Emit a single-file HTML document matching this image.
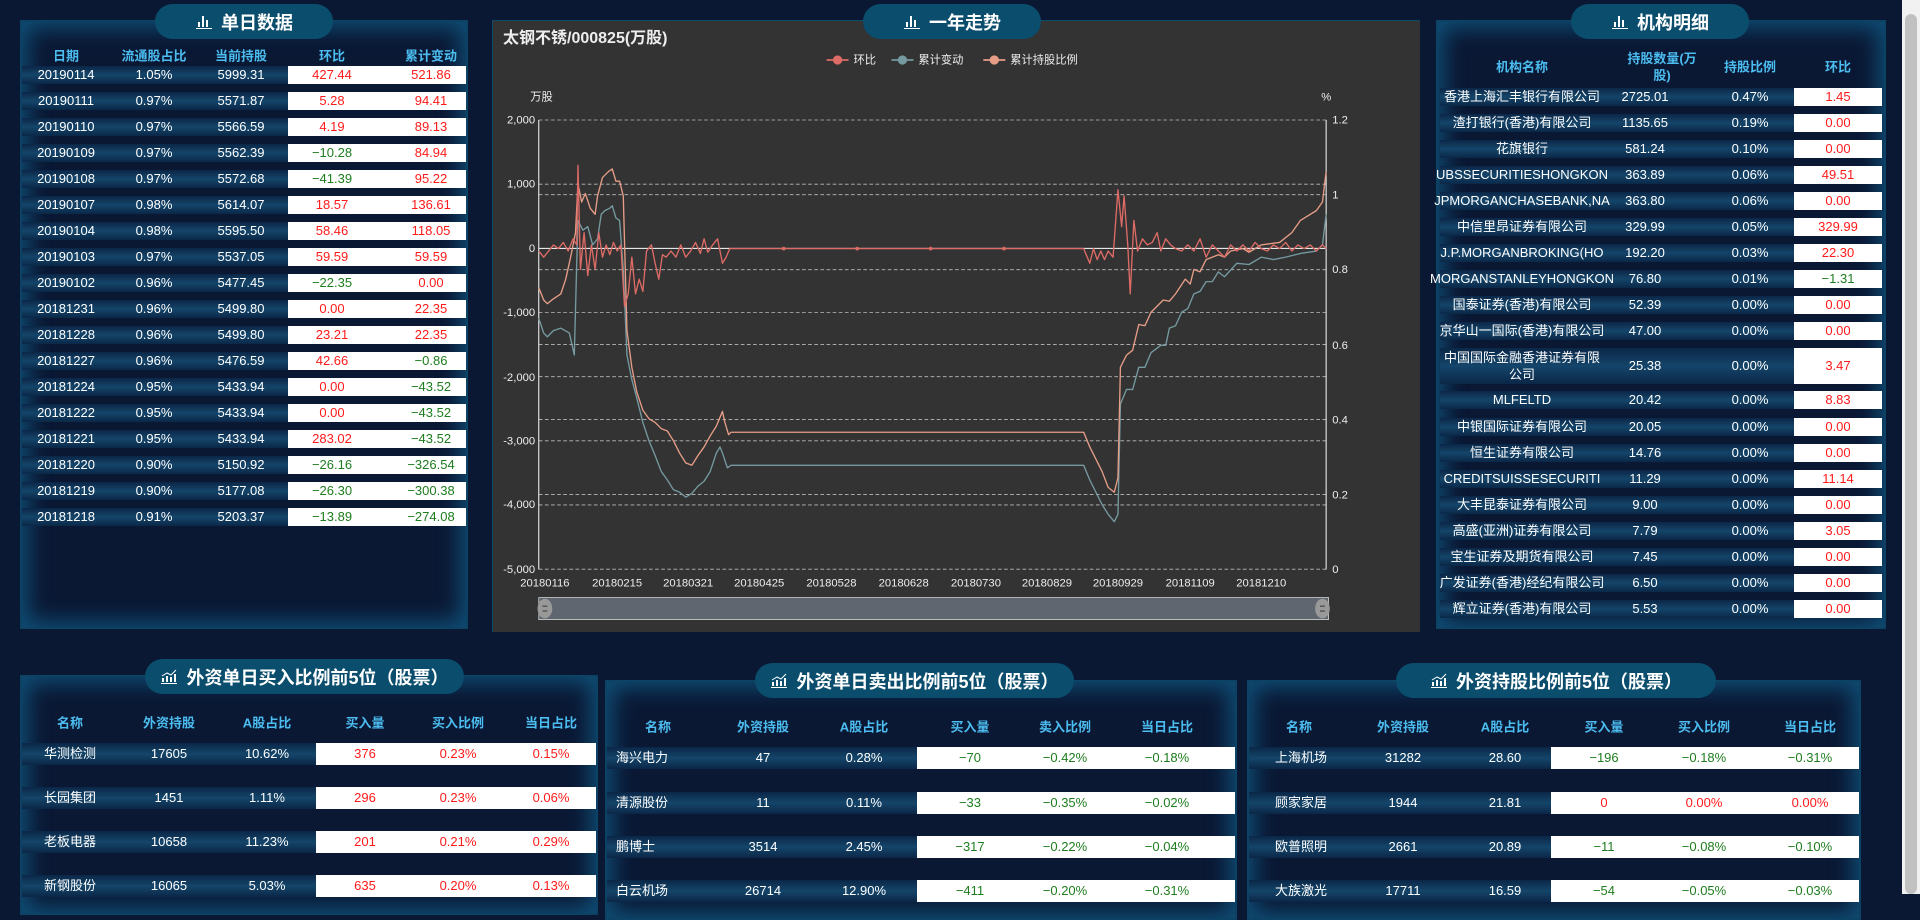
<!DOCTYPE html>
<html><head><meta charset="utf-8">
<style>
*{margin:0;padding:0;box-sizing:border-box}
body{width:1920px;height:894px;overflow:hidden;background:#0a1834;font-family:"Liberation Sans","Noto Sans CJK SC",sans-serif;color:#fff;position:relative}
.panel{position:absolute;background:#0a1834;border:2px solid #0c4263;box-shadow:inset 0 0 22px 6px rgba(18,96,140,.75)}
.pill{position:absolute;height:35px;border-radius:18px;background:#0a4d6d;color:#fff;font-weight:bold;font-size:18px;display:flex;align-items:center;justify-content:center;gap:8px;z-index:3}
.pill svg{display:block}
.row{position:absolute;height:18px;font-size:13px;line-height:18px;background:linear-gradient(to bottom,#0b2747,#14456a 50%,#0b2747)}
.w{position:absolute;top:0;bottom:0;background:#fff}
.c{position:absolute;top:0;transform:translateX(-50%);white-space:nowrap}
.r{color:#ff1a1a}.g{color:#1e7d1e}
.h{position:absolute;transform:translate(-50%,-50%);color:#4cbdf0;font-weight:bold;font-size:13px;white-space:nowrap;text-align:center;line-height:17px}
.brow{height:22px;line-height:22px}
</style></head><body>

<!-- LEFT PANEL -->
<div class="panel" style="left:20px;top:20px;width:448px;height:609px"></div>
<div class="pill" style="left:155px;top:4px;width:178px"><svg width="18" height="16" viewBox="0 0 18 16"><rect x="3" y="8" width="2" height="5" fill="#fff"/><rect x="7" y="2" width="2" height="11" fill="#fff"/><rect x="11" y="6" width="2" height="7" fill="#fff"/><rect x="1" y="14" width="16" height="1" fill="#fff"/></svg>单日数据</div>
<div class="h" style="left:66px;top:56px">日期</div>
<div class="h" style="left:154px;top:56px">流通股占比</div>
<div class="h" style="left:241px;top:56px">当前持股</div>
<div class="h" style="left:332px;top:56px">环比</div>
<div class="h" style="left:431px;top:56px">累计变动</div>

<!-- CHART PANEL -->
<div style="position:absolute;left:492px;top:20px;width:928px;height:612px;background:#333;border-top:1px solid #0c4a6a;border-left:1px solid #0c4a6a"></div>
<div class="pill" style="left:863px;top:4px;width:178px"><svg width="18" height="16" viewBox="0 0 18 16"><rect x="3" y="8" width="2" height="5" fill="#fff"/><rect x="7" y="2" width="2" height="11" fill="#fff"/><rect x="11" y="6" width="2" height="7" fill="#fff"/><rect x="1" y="14" width="16" height="1" fill="#fff"/></svg>一年走势</div>
<div style="position:absolute;left:503px;top:24px;font-size:16px;font-weight:bold;color:#eee">太钢不锈/000825(万股)</div>
<svg style="position:absolute;left:0;top:0" width="1920" height="894">
<g transform="scale(1.2245)" font-family="Liberation Sans, Noto Sans CJK SC, sans-serif">
<g stroke="#bbb" stroke-width="0.7" stroke-dasharray="3,2">
<line x1="440" x2="1083" y1="98" y2="98"/><line x1="440" x2="1083" y1="150.4" y2="150.4"/><line x1="440" x2="1083" y1="255.2" y2="255.2"/><line x1="440" x2="1083" y1="307.6" y2="307.6"/><line x1="440" x2="1083" y1="360" y2="360"/><line x1="440" x2="1083" y1="412.4" y2="412.4"/><line x1="440" x2="1083" y1="464.8" y2="464.8"/>
<line x1="440" x2="1083" y1="159" y2="159"/><line x1="440" x2="1083" y1="220.2" y2="220.2"/><line x1="440" x2="1083" y1="281.4" y2="281.4"/><line x1="440" x2="1083" y1="342.6" y2="342.6"/><line x1="440" x2="1083" y1="403.8" y2="403.8"/>
</g>
<line x1="440" x2="1083" y1="202.8" y2="202.8" stroke="#fff" stroke-width="0.8"/>
<line x1="440" x2="440" y1="98" y2="465" stroke="#fff" stroke-width="0.8"/>
<line x1="1083" x2="1083" y1="98" y2="465" stroke="#fff" stroke-width="0.8"/>
<g fill="#eee" font-size="9.2" text-anchor="end">
<text x="437" y="101">2,000</text><text x="437" y="153">1,000</text><text x="437" y="206">0</text><text x="437" y="258">-1,000</text><text x="437" y="311">-2,000</text><text x="437" y="363">-3,000</text><text x="437" y="415">-4,000</text><text x="437" y="468">-5,000</text>
</g>
<g fill="#eee" font-size="9.2">
<text x="1088" y="101">1.2</text><text x="1088" y="162">1</text><text x="1088" y="223">0.8</text><text x="1088" y="285">0.6</text><text x="1088" y="346">0.4</text><text x="1088" y="407">0.2</text><text x="1088" y="468">0</text>
<text x="433" y="82">万股</text><text x="1079" y="82">%</text>
</g>
<g fill="#eee" font-size="9.2" text-anchor="middle">
<text x="445" y="479">20180116</text><text x="504" y="479">20180215</text><text x="562" y="479">20180321</text><text x="620" y="479">20180425</text><text x="679" y="479">20180528</text><text x="738" y="479">20180628</text><text x="797" y="479">20180730</text><text x="855" y="479">20180829</text><text x="913" y="479">20180929</text><text x="972" y="479">20181109</text><text x="1030" y="479">20181210</text>
</g>
<!-- legend -->
<g font-size="9.2" fill="#eee">
<line x1="675" x2="693" y1="49" y2="49" stroke="#dd6b66" stroke-width="1.5"/><circle cx="684" cy="49" r="3.8" fill="#dd6b66"/><text x="697" y="52">环比</text>
<line x1="728" x2="746" y1="49" y2="49" stroke="#759aa0" stroke-width="1.5"/><circle cx="737" cy="49" r="3.8" fill="#759aa0"/><text x="750" y="52">累计变动</text>
<line x1="803" x2="821" y1="49" y2="49" stroke="#e69d87" stroke-width="1.5"/><circle cx="812" cy="49" r="3.8" fill="#e69d87"/><text x="825" y="52">累计持股比例</text>
</g>
<g fill="none" stroke-width="1.1" stroke-linejoin="round">
<polyline stroke="#759aa0" points="440,260 444,272 447,275 452,270 458,268 465,272 469,290 471,215 472,180 476,188 480,185 484,200 488,195 491,175 494,172 498,170 500,168 503,178 506,180 509,220 512,290 516,310 520,325 525,345 530,360 535,372 540,385 545,392 550,400 555,402 560,406 565,403 570,397 575,393 580,385 585,370 588,365 590,370 594,382 597,380 885,380 890,392 895,402 900,412 905,420 910,426 913,420 915,330 920,318 925,318 930,300 935,300 940,288 948,282 952,282 955,268 960,266 965,255 970,252 975,240 980,238 985,230 990,230 995,222 1000,226 1010,215 1020,216 1030,210 1040,212 1050,210 1062,207 1075,205 1080,200 1083,175"/>
<polyline stroke="#e69d87" points="440,235 444,245 447,248 452,244 458,240 462,228 466,210 470,190 472,150 475,165 478,158 482,170 486,175 488,160 492,145 497,140 500,138 503,148 506,148 509,160 512,270 516,300 520,320 525,335 530,342 535,345 540,350 545,352 550,360 555,370 560,378 565,380 570,372 575,365 580,356 585,348 590,336 592,345 595,355 597,353 885,353 890,365 895,375 900,385 905,398 910,402 913,390 915,300 920,290 925,286 930,265 935,266 940,255 950,245 955,246 960,240 968,228 972,232 975,220 980,222 985,212 995,208 1000,210 1005,205 1015,203 1020,206 1030,200 1045,198 1055,190 1062,180 1075,172 1080,165 1083,140"/>
<polyline stroke="#dd6b66" points="440,205 444,210 448,205 452,200 456,203 460,198 464,205 468,195 471,200 472,135 474,220 477,190 480,225 483,200 486,220 489,190 492,210 495,200 498,208 501,198 504,205 507,200 510,250 513,240 516,210 519,240 522,228 525,238 528,205 532,200 535,215 538,228 541,208 544,210 548,205 552,210 556,200 560,210 564,205 568,198 572,207 575,195 578,206 582,200 586,195 590,215 593,210 596,203 598,203 885,203 890,215 893,203 896,212 899,205 902,212 905,205 909,210 913,155 916,185 918,160 921,200 923,240 926,180 929,205 933,195 937,200 941,198 945,190 948,205 952,195 956,200 960,203 965,205 970,200 975,205 980,195 985,210 990,200 995,205 1000,210 1005,200 1010,205 1015,200 1020,205 1025,198 1030,203 1035,205 1040,200 1045,203 1050,198 1055,205 1060,200 1065,203 1070,200 1075,205 1080,200 1083,203"/>
</g>
<g fill="#dd6b66"><circle cx="640" cy="203" r="1.5"/><circle cx="700" cy="203" r="1.5"/><circle cx="760" cy="203" r="1.5"/><circle cx="820" cy="203" r="1.5"/></g>
<!-- slider -->
<rect x="440" y="488" width="645" height="18" fill="#5f6670" stroke="#ddd" stroke-width="0.6"/>
<ellipse cx="445" cy="497" rx="6" ry="8" fill="#999"/><ellipse cx="1080" cy="497" rx="6" ry="8" fill="#999"/>
<g stroke="#333" stroke-width="0.8"><line x1="443" x2="447" y1="495" y2="495"/><line x1="443" x2="447" y1="499" y2="499"/><line x1="1078" x2="1082" y1="495" y2="495"/><line x1="1078" x2="1082" y1="499" y2="499"/></g>
</g></svg>

<!-- RIGHT PANEL -->
<div class="panel" style="left:1436px;top:20px;width:450px;height:609px"></div>
<div class="pill" style="left:1571px;top:4px;width:178px"><svg width="18" height="16" viewBox="0 0 18 16"><rect x="3" y="8" width="2" height="5" fill="#fff"/><rect x="7" y="2" width="2" height="11" fill="#fff"/><rect x="11" y="6" width="2" height="7" fill="#fff"/><rect x="1" y="14" width="16" height="1" fill="#fff"/></svg>机构明细</div>
<div class="h" style="left:1522px;top:67px">机构名称</div>
<div class="h" style="left:1662px;top:67px">持股数量(万<br>股)</div>
<div class="h" style="left:1750px;top:67px">持股比例</div>
<div class="h" style="left:1838px;top:67px">环比</div>

<!-- BOTTOM PANELS -->
<div class="panel" style="left:20px;top:675px;width:578px;height:240px"></div>
<div class="pill" style="left:145px;top:659px;width:319px"><svg width="18" height="16" viewBox="0 0 18 16"><rect x="2" y="9" width="2" height="4" fill="#fff"/><rect x="6" y="7" width="2" height="6" fill="#fff"/><rect x="10" y="8" width="2" height="5" fill="#fff"/><rect x="14" y="5" width="2" height="8" fill="#fff"/><polyline points="2,7 7,4 11,6 16,1" fill="none" stroke="#fff" stroke-width="1"/><rect x="1" y="14" width="16" height="1" fill="#fff"/></svg>外资单日买入比例前5位（股票）</div>
<div class="panel" style="left:605px;top:680px;width:632px;height:240px"></div>
<div class="pill" style="left:755px;top:663px;width:319px"><svg width="18" height="16" viewBox="0 0 18 16"><rect x="2" y="9" width="2" height="4" fill="#fff"/><rect x="6" y="7" width="2" height="6" fill="#fff"/><rect x="10" y="8" width="2" height="5" fill="#fff"/><rect x="14" y="5" width="2" height="8" fill="#fff"/><polyline points="2,7 7,4 11,6 16,1" fill="none" stroke="#fff" stroke-width="1"/><rect x="1" y="14" width="16" height="1" fill="#fff"/></svg>外资单日卖出比例前5位（股票）</div>
<div class="panel" style="left:1247px;top:680px;width:614px;height:240px"></div>
<div class="pill" style="left:1396px;top:663px;width:320px"><svg width="18" height="16" viewBox="0 0 18 16"><rect x="2" y="9" width="2" height="4" fill="#fff"/><rect x="6" y="7" width="2" height="6" fill="#fff"/><rect x="10" y="8" width="2" height="5" fill="#fff"/><rect x="14" y="5" width="2" height="8" fill="#fff"/><polyline points="2,7 7,4 11,6 16,1" fill="none" stroke="#fff" stroke-width="1"/><rect x="1" y="14" width="16" height="1" fill="#fff"/></svg>外资持股比例前5位（股票）</div>

<!-- scrollbar -->
<div style="position:absolute;left:1902px;top:0;width:18px;height:894px;background:#f1f1f1"></div>
<div style="position:absolute;left:1905px;top:14px;width:12px;height:880px;background:#c1c1c1;border-radius:6px"></div>

<div style="position:absolute;left:0;top:0">
<!-- left rows -->
<div class="row" style="left:22px;top:66px;width:444px"><div class="w" style="left:266px;right:0"></div><span class="c" style="left:44px">20190114</span><span class="c" style="left:132px">1.05%</span><span class="c" style="left:219px">5999.31</span><span class="c r" style="left:310px">427.44</span><span class="c r" style="left:409px">521.86</span></div>
<div class="row" style="left:22px;top:92px;width:444px"><div class="w" style="left:266px;right:0"></div><span class="c" style="left:44px">20190111</span><span class="c" style="left:132px">0.97%</span><span class="c" style="left:219px">5571.87</span><span class="c r" style="left:310px">5.28</span><span class="c r" style="left:409px">94.41</span></div>
<div class="row" style="left:22px;top:118px;width:444px"><div class="w" style="left:266px;right:0"></div><span class="c" style="left:44px">20190110</span><span class="c" style="left:132px">0.97%</span><span class="c" style="left:219px">5566.59</span><span class="c r" style="left:310px">4.19</span><span class="c r" style="left:409px">89.13</span></div>
<div class="row" style="left:22px;top:144px;width:444px"><div class="w" style="left:266px;right:0"></div><span class="c" style="left:44px">20190109</span><span class="c" style="left:132px">0.97%</span><span class="c" style="left:219px">5562.39</span><span class="c g" style="left:310px">−10.28</span><span class="c r" style="left:409px">84.94</span></div>
<div class="row" style="left:22px;top:170px;width:444px"><div class="w" style="left:266px;right:0"></div><span class="c" style="left:44px">20190108</span><span class="c" style="left:132px">0.97%</span><span class="c" style="left:219px">5572.68</span><span class="c g" style="left:310px">−41.39</span><span class="c r" style="left:409px">95.22</span></div>
<div class="row" style="left:22px;top:196px;width:444px"><div class="w" style="left:266px;right:0"></div><span class="c" style="left:44px">20190107</span><span class="c" style="left:132px">0.98%</span><span class="c" style="left:219px">5614.07</span><span class="c r" style="left:310px">18.57</span><span class="c r" style="left:409px">136.61</span></div>
<div class="row" style="left:22px;top:222px;width:444px"><div class="w" style="left:266px;right:0"></div><span class="c" style="left:44px">20190104</span><span class="c" style="left:132px">0.98%</span><span class="c" style="left:219px">5595.50</span><span class="c r" style="left:310px">58.46</span><span class="c r" style="left:409px">118.05</span></div>
<div class="row" style="left:22px;top:248px;width:444px"><div class="w" style="left:266px;right:0"></div><span class="c" style="left:44px">20190103</span><span class="c" style="left:132px">0.97%</span><span class="c" style="left:219px">5537.05</span><span class="c r" style="left:310px">59.59</span><span class="c r" style="left:409px">59.59</span></div>
<div class="row" style="left:22px;top:274px;width:444px"><div class="w" style="left:266px;right:0"></div><span class="c" style="left:44px">20190102</span><span class="c" style="left:132px">0.96%</span><span class="c" style="left:219px">5477.45</span><span class="c g" style="left:310px">−22.35</span><span class="c r" style="left:409px">0.00</span></div>
<div class="row" style="left:22px;top:300px;width:444px"><div class="w" style="left:266px;right:0"></div><span class="c" style="left:44px">20181231</span><span class="c" style="left:132px">0.96%</span><span class="c" style="left:219px">5499.80</span><span class="c r" style="left:310px">0.00</span><span class="c r" style="left:409px">22.35</span></div>
<div class="row" style="left:22px;top:326px;width:444px"><div class="w" style="left:266px;right:0"></div><span class="c" style="left:44px">20181228</span><span class="c" style="left:132px">0.96%</span><span class="c" style="left:219px">5499.80</span><span class="c r" style="left:310px">23.21</span><span class="c r" style="left:409px">22.35</span></div>
<div class="row" style="left:22px;top:352px;width:444px"><div class="w" style="left:266px;right:0"></div><span class="c" style="left:44px">20181227</span><span class="c" style="left:132px">0.96%</span><span class="c" style="left:219px">5476.59</span><span class="c r" style="left:310px">42.66</span><span class="c g" style="left:409px">−0.86</span></div>
<div class="row" style="left:22px;top:378px;width:444px"><div class="w" style="left:266px;right:0"></div><span class="c" style="left:44px">20181224</span><span class="c" style="left:132px">0.95%</span><span class="c" style="left:219px">5433.94</span><span class="c r" style="left:310px">0.00</span><span class="c g" style="left:409px">−43.52</span></div>
<div class="row" style="left:22px;top:404px;width:444px"><div class="w" style="left:266px;right:0"></div><span class="c" style="left:44px">20181222</span><span class="c" style="left:132px">0.95%</span><span class="c" style="left:219px">5433.94</span><span class="c r" style="left:310px">0.00</span><span class="c g" style="left:409px">−43.52</span></div>
<div class="row" style="left:22px;top:430px;width:444px"><div class="w" style="left:266px;right:0"></div><span class="c" style="left:44px">20181221</span><span class="c" style="left:132px">0.95%</span><span class="c" style="left:219px">5433.94</span><span class="c r" style="left:310px">283.02</span><span class="c g" style="left:409px">−43.52</span></div>
<div class="row" style="left:22px;top:456px;width:444px"><div class="w" style="left:266px;right:0"></div><span class="c" style="left:44px">20181220</span><span class="c" style="left:132px">0.90%</span><span class="c" style="left:219px">5150.92</span><span class="c g" style="left:310px">−26.16</span><span class="c g" style="left:409px">−326.54</span></div>
<div class="row" style="left:22px;top:482px;width:444px"><div class="w" style="left:266px;right:0"></div><span class="c" style="left:44px">20181219</span><span class="c" style="left:132px">0.90%</span><span class="c" style="left:219px">5177.08</span><span class="c g" style="left:310px">−26.30</span><span class="c g" style="left:409px">−300.38</span></div>
<div class="row" style="left:22px;top:508px;width:444px"><div class="w" style="left:266px;right:0"></div><span class="c" style="left:44px">20181218</span><span class="c" style="left:132px">0.91%</span><span class="c" style="left:219px">5203.37</span><span class="c g" style="left:310px">−13.89</span><span class="c g" style="left:409px">−274.08</span></div>

<!-- right rows -->
<div class="row" style="left:1440px;top:88px;width:442px"><div class="w" style="left:354px;right:0"></div><span class="c" style="left:82px">香港上海汇丰银行有限公司</span><span class="c" style="left:205px">2725.01</span><span class="c" style="left:310px">0.47%</span><span class="c r" style="left:398px">1.45</span></div>
<div class="row" style="left:1440px;top:114px;width:442px"><div class="w" style="left:354px;right:0"></div><span class="c" style="left:82px">渣打银行(香港)有限公司</span><span class="c" style="left:205px">1135.65</span><span class="c" style="left:310px">0.19%</span><span class="c r" style="left:398px">0.00</span></div>
<div class="row" style="left:1440px;top:140px;width:442px"><div class="w" style="left:354px;right:0"></div><span class="c" style="left:82px">花旗银行</span><span class="c" style="left:205px">581.24</span><span class="c" style="left:310px">0.10%</span><span class="c r" style="left:398px">0.00</span></div>
<div class="row" style="left:1440px;top:166px;width:442px"><div class="w" style="left:354px;right:0"></div><span class="c" style="left:82px">UBSSECURITIESHONGKON</span><span class="c" style="left:205px">363.89</span><span class="c" style="left:310px">0.06%</span><span class="c r" style="left:398px">49.51</span></div>
<div class="row" style="left:1440px;top:192px;width:442px"><div class="w" style="left:354px;right:0"></div><span class="c" style="left:82px">JPMORGANCHASEBANK,NA</span><span class="c" style="left:205px">363.80</span><span class="c" style="left:310px">0.06%</span><span class="c r" style="left:398px">0.00</span></div>
<div class="row" style="left:1440px;top:218px;width:442px"><div class="w" style="left:354px;right:0"></div><span class="c" style="left:82px">中信里昂证券有限公司</span><span class="c" style="left:205px">329.99</span><span class="c" style="left:310px">0.05%</span><span class="c r" style="left:398px">329.99</span></div>
<div class="row" style="left:1440px;top:244px;width:442px"><div class="w" style="left:354px;right:0"></div><span class="c" style="left:82px">J.P.MORGANBROKING(HO</span><span class="c" style="left:205px">192.20</span><span class="c" style="left:310px">0.03%</span><span class="c r" style="left:398px">22.30</span></div>
<div class="row" style="left:1440px;top:270px;width:442px"><div class="w" style="left:354px;right:0"></div><span class="c" style="left:82px">MORGANSTANLEYHONGKON</span><span class="c" style="left:205px">76.80</span><span class="c" style="left:310px">0.01%</span><span class="c g" style="left:398px">−1.31</span></div>
<div class="row" style="left:1440px;top:296px;width:442px"><div class="w" style="left:354px;right:0"></div><span class="c" style="left:82px">国泰证券(香港)有限公司</span><span class="c" style="left:205px">52.39</span><span class="c" style="left:310px">0.00%</span><span class="c r" style="left:398px">0.00</span></div>
<div class="row" style="left:1440px;top:322px;width:442px"><div class="w" style="left:354px;right:0"></div><span class="c" style="left:82px">京华山一国际(香港)有限公司</span><span class="c" style="left:205px">47.00</span><span class="c" style="left:310px">0.00%</span><span class="c r" style="left:398px">0.00</span></div>
<div class="row" style="left:1440px;top:348px;width:442px;height:36px"><div class="w" style="left:354px;right:0"></div><span class="c" style="left:82px;line-height:17px;top:1px;text-align:center;white-space:normal;width:164px">中国国际金融香港证券有限公司</span><span class="c" style="left:205px;top:9px">25.38</span><span class="c" style="left:310px;top:9px">0.00%</span><span class="c r" style="left:398px;top:9px">3.47</span></div>
<div class="row" style="left:1440px;top:391px;width:442px"><div class="w" style="left:354px;right:0"></div><span class="c" style="left:82px">MLFELTD</span><span class="c" style="left:205px">20.42</span><span class="c" style="left:310px">0.00%</span><span class="c r" style="left:398px">8.83</span></div>
<div class="row" style="left:1440px;top:418px;width:442px"><div class="w" style="left:354px;right:0"></div><span class="c" style="left:82px">中银国际证券有限公司</span><span class="c" style="left:205px">20.05</span><span class="c" style="left:310px">0.00%</span><span class="c r" style="left:398px">0.00</span></div>
<div class="row" style="left:1440px;top:444px;width:442px"><div class="w" style="left:354px;right:0"></div><span class="c" style="left:82px">恒生证券有限公司</span><span class="c" style="left:205px">14.76</span><span class="c" style="left:310px">0.00%</span><span class="c r" style="left:398px">0.00</span></div>
<div class="row" style="left:1440px;top:470px;width:442px"><div class="w" style="left:354px;right:0"></div><span class="c" style="left:82px">CREDITSUISSESECURITI</span><span class="c" style="left:205px">11.29</span><span class="c" style="left:310px">0.00%</span><span class="c r" style="left:398px">11.14</span></div>
<div class="row" style="left:1440px;top:496px;width:442px"><div class="w" style="left:354px;right:0"></div><span class="c" style="left:82px">大丰昆泰证券有限公司</span><span class="c" style="left:205px">9.00</span><span class="c" style="left:310px">0.00%</span><span class="c r" style="left:398px">0.00</span></div>
<div class="row" style="left:1440px;top:522px;width:442px"><div class="w" style="left:354px;right:0"></div><span class="c" style="left:82px">高盛(亚洲)证券有限公司</span><span class="c" style="left:205px">7.79</span><span class="c" style="left:310px">0.00%</span><span class="c r" style="left:398px">3.05</span></div>
<div class="row" style="left:1440px;top:548px;width:442px"><div class="w" style="left:354px;right:0"></div><span class="c" style="left:82px">宝生证券及期货有限公司</span><span class="c" style="left:205px">7.45</span><span class="c" style="left:310px">0.00%</span><span class="c r" style="left:398px">0.00</span></div>
<div class="row" style="left:1440px;top:574px;width:442px"><div class="w" style="left:354px;right:0"></div><span class="c" style="left:82px">广发证券(香港)经纪有限公司</span><span class="c" style="left:205px">6.50</span><span class="c" style="left:310px">0.00%</span><span class="c r" style="left:398px">0.00</span></div>
<div class="row" style="left:1440px;top:600px;width:442px"><div class="w" style="left:354px;right:0"></div><span class="c" style="left:82px">辉立证券(香港)有限公司</span><span class="c" style="left:205px">5.53</span><span class="c" style="left:310px">0.00%</span><span class="c r" style="left:398px">0.00</span></div>

<!-- bottom panel 1 -->
<div class="h" style="left:70px;top:723px">名称</div><div class="h" style="left:169px;top:723px">外资持股</div><div class="h" style="left:267px;top:723px">A股占比</div><div class="h" style="left:365px;top:723px">买入量</div><div class="h" style="left:458px;top:723px">买入比例</div><div class="h" style="left:551px;top:723px">当日占比</div>
<div class="row brow" style="left:22px;top:743px;width:574px"><div class="w" style="left:294px;right:0"></div><span style="position:absolute;left:22px">华测检测</span><span class="c" style="left:147px">17605</span><span class="c" style="left:245px">10.62%</span><span class="c r" style="left:343px">376</span><span class="c r" style="left:436px">0.23%</span><span class="c r" style="left:529px">0.15%</span></div>
<div class="row brow" style="left:22px;top:787px;width:574px"><div class="w" style="left:294px;right:0"></div><span style="position:absolute;left:22px">长园集团</span><span class="c" style="left:147px">1451</span><span class="c" style="left:245px">1.11%</span><span class="c r" style="left:343px">296</span><span class="c r" style="left:436px">0.23%</span><span class="c r" style="left:529px">0.06%</span></div>
<div class="row brow" style="left:22px;top:831px;width:574px"><div class="w" style="left:294px;right:0"></div><span style="position:absolute;left:22px">老板电器</span><span class="c" style="left:147px">10658</span><span class="c" style="left:245px">11.23%</span><span class="c r" style="left:343px">201</span><span class="c r" style="left:436px">0.21%</span><span class="c r" style="left:529px">0.29%</span></div>
<div class="row brow" style="left:22px;top:875px;width:574px"><div class="w" style="left:294px;right:0"></div><span style="position:absolute;left:22px">新钢股份</span><span class="c" style="left:147px">16065</span><span class="c" style="left:245px">5.03%</span><span class="c r" style="left:343px">635</span><span class="c r" style="left:436px">0.20%</span><span class="c r" style="left:529px">0.13%</span></div>

<!-- bottom panel 2 -->
<div class="h" style="left:658px;top:727px">名称</div><div class="h" style="left:763px;top:727px">外资持股</div><div class="h" style="left:864px;top:727px">A股占比</div><div class="h" style="left:970px;top:727px">买入量</div><div class="h" style="left:1065px;top:727px">卖入比例</div><div class="h" style="left:1167px;top:727px">当日占比</div>
<div class="row brow" style="left:607px;top:747px;width:628px"><div class="w" style="left:310px;right:0"></div><span style="position:absolute;left:9px">海兴电力</span><span class="c" style="left:156px">47</span><span class="c" style="left:257px">0.28%</span><span class="c g" style="left:363px">−70</span><span class="c g" style="left:458px">−0.42%</span><span class="c g" style="left:560px">−0.18%</span></div>
<div class="row brow" style="left:607px;top:792px;width:628px"><div class="w" style="left:310px;right:0"></div><span style="position:absolute;left:9px">清源股份</span><span class="c" style="left:156px">11</span><span class="c" style="left:257px">0.11%</span><span class="c g" style="left:363px">−33</span><span class="c g" style="left:458px">−0.35%</span><span class="c g" style="left:560px">−0.02%</span></div>
<div class="row brow" style="left:607px;top:836px;width:628px"><div class="w" style="left:310px;right:0"></div><span style="position:absolute;left:9px">鹏博士</span><span class="c" style="left:156px">3514</span><span class="c" style="left:257px">2.45%</span><span class="c g" style="left:363px">−317</span><span class="c g" style="left:458px">−0.22%</span><span class="c g" style="left:560px">−0.04%</span></div>
<div class="row brow" style="left:607px;top:880px;width:628px"><div class="w" style="left:310px;right:0"></div><span style="position:absolute;left:9px">白云机场</span><span class="c" style="left:156px">26714</span><span class="c" style="left:257px">12.90%</span><span class="c g" style="left:363px">−411</span><span class="c g" style="left:458px">−0.20%</span><span class="c g" style="left:560px">−0.31%</span></div>

<!-- bottom panel 3 -->
<div class="h" style="left:1299px;top:727px">名称</div><div class="h" style="left:1403px;top:727px">外资持股</div><div class="h" style="left:1505px;top:727px">A股占比</div><div class="h" style="left:1604px;top:727px">买入量</div><div class="h" style="left:1704px;top:727px">买入比例</div><div class="h" style="left:1810px;top:727px">当日占比</div>
<div class="row brow" style="left:1249px;top:747px;width:610px"><div class="w" style="left:302px;right:0"></div><span style="position:absolute;left:26px">上海机场</span><span class="c" style="left:154px">31282</span><span class="c" style="left:256px">28.60</span><span class="c g" style="left:355px">−196</span><span class="c g" style="left:455px">−0.18%</span><span class="c g" style="left:561px">−0.31%</span></div>
<div class="row brow" style="left:1249px;top:792px;width:610px"><div class="w" style="left:302px;right:0"></div><span style="position:absolute;left:26px">顾家家居</span><span class="c" style="left:154px">1944</span><span class="c" style="left:256px">21.81</span><span class="c r" style="left:355px">0</span><span class="c r" style="left:455px">0.00%</span><span class="c r" style="left:561px">0.00%</span></div>
<div class="row brow" style="left:1249px;top:836px;width:610px"><div class="w" style="left:302px;right:0"></div><span style="position:absolute;left:26px">欧普照明</span><span class="c" style="left:154px">2661</span><span class="c" style="left:256px">20.89</span><span class="c g" style="left:355px">−11</span><span class="c g" style="left:455px">−0.08%</span><span class="c g" style="left:561px">−0.10%</span></div>
<div class="row brow" style="left:1249px;top:880px;width:610px"><div class="w" style="left:302px;right:0"></div><span style="position:absolute;left:26px">大族激光</span><span class="c" style="left:154px">17711</span><span class="c" style="left:256px">16.59</span><span class="c g" style="left:355px">−54</span><span class="c g" style="left:455px">−0.05%</span><span class="c g" style="left:561px">−0.03%</span></div>
</div>
</body></html>
